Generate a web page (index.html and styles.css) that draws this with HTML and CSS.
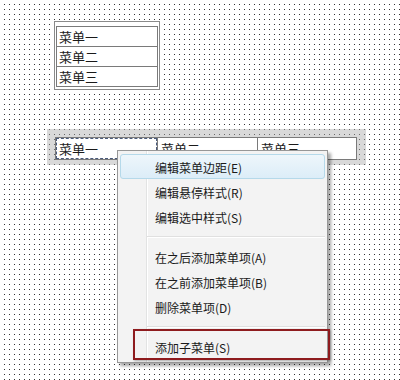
FILE: index.html
```html
<!DOCTYPE html>
<html lang="zh-CN">
<head>
    <meta charset="UTF-8">
    <title>菜单编辑器</title>
    <link rel="stylesheet" href="styles.css">
</head>
<body>
<div class="canvas">
    <div class="vmenu">
        <div class="vmenu-list">
            <div class="vmenu-item">菜单一</div>
            <div class="vmenu-item">菜单二</div>
            <div class="vmenu-item">菜单三</div>
        </div>
    </div>

    <div class="hmenu-select">
        <div class="hmenu">
            <div class="hmenu-item focused">菜单一</div>
            <div class="hmenu-item">菜单二</div>
            <div class="hmenu-item">菜单三</div>
        </div>
    </div>

    <!-- context menu over the designer -->
    <div class="context">
        <div class="ctx-item hover">编辑菜单边距(E)</div>
        <div class="ctx-item">编辑悬停样式(R)</div>
        <div class="ctx-item">编辑选中样式(S)</div>
        <div class="ctx-sep"></div>
        <div class="ctx-item">在之后添加菜单项(A)</div>
        <div class="ctx-item">在之前添加菜单项(B)</div>
        <div class="ctx-item">删除菜单项(D)</div>
        <div class="ctx-sep"></div>
        <div class="ctx-item">添加子菜单(S)</div>
    </div>
    <div class="mark"></div>
</div>
</body>
</html>
```

FILE: styles.css
```css
body {
    margin: 0;
    font-family: "Noto Sans CJK SC", "Noto Sans", sans-serif;
    color: #1a1a1a;
}

.canvas {
    position: relative;
    width: 400px;
    height: 380px;
    overflow: hidden;
    background-color: #fff;
    background-image: conic-gradient(from 270deg at 1px 1px, #333 90deg, transparent 0);
    background-size: 5px 5px;
    background-position: 4px 4px;
    padding-top: 21px;
    box-sizing: border-box;
}

.vmenu {
    margin-left: 54px;
    width: 106px;
    box-sizing: border-box;
    border: 1px solid #8a8a8a;
    padding: 4px 1px 2px 1px;
    background: #fff;
}

.vmenu-list {
    border: 1px solid #7a7a7a;
}

.vmenu-item {
    height: 19px;
    line-height: 19px;
    font-size: 13px;
    padding-left: 2px;
    border-top: 1px solid #7a7a7a;
}

.vmenu-item:first-child {
    border-top: none;
}

.hmenu-select {
    margin: 39px 0 0 47px;
    width: 319px;
    box-sizing: border-box;
    padding: 8px 9px 5px 8px;
    background: rgba(170, 170, 170, 0.45);
}

.hmenu {
    display: flex;
    height: 23px;
    box-sizing: border-box;
    border: 1px solid #7a7a7a;
    background: #fff;
}

.hmenu-item {
    flex: 0 0 100px;
    font-size: 13px;
    line-height: 21px;
    padding-left: 3px;
    box-sizing: border-box;
    border-left: 1px solid #7a7a7a;
}

.hmenu-item:first-child {
    border-left: none;
}

.hmenu-item.focused {
    outline: 1px dashed #4a5a7a;
    outline-offset: -1px;
    flex-basis: 101px;
}

.context {
    position: absolute;
    left: 117px;
    top: 150px;
    width: 211px;
    box-sizing: border-box;
    padding: 3px 2px;
    border: 1px solid #979797;
    background: #f3f3f3 linear-gradient(to right, transparent 28px, #e2e3e3 28px, #e2e3e3 29px, #fff 29px, #fff 30px, transparent 30px);
    box-shadow: 3px 3px 3px rgba(0, 0, 0, 0.35);
}

.ctx-item {
    height: 25px;
    line-height: 25px;
    font-size: 12px;
    padding-left: 34px;
    border: 1px solid transparent;
    border-radius: 3px;
    box-sizing: border-box;
}

.ctx-item.hover {
    border-color: #b5d9ea;
    background: linear-gradient(#eef6fb, #dcedf8);
}

.ctx-sep {
    height: 15px;
    margin-left: 27px;
    background: linear-gradient(transparent 7px, #e0e0e0 7px, #e0e0e0 8px, #fff 8px, #fff 9px, transparent 9px);
}

.mark {
    position: absolute;
    left: 133px;
    top: 329px;
    width: 197px;
    height: 31px;
    box-sizing: border-box;
    border: 2px solid #8e1b1e;
    box-shadow: 1px 1px 2px rgba(0, 0, 0, 0.3);
}
```
